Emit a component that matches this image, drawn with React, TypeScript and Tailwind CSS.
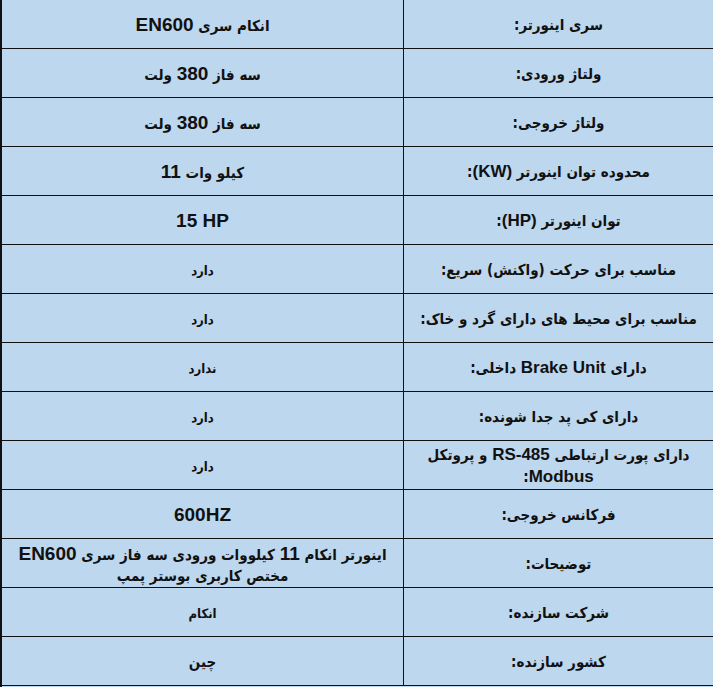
import { ReactNode } from "react";

type Row = {
  label: ReactNode;
  value: ReactNode;
  small?: boolean;
};

/* latin runs (EN600, 380, RS-485 ...) are a bit bigger than the farsi text */
const Latin = ({ children, big }: { children: ReactNode; big?: boolean }) => (
  <span
    className={big ? "text-[19px]" : "text-[17px]"}
    style={{ fontFamily: '"Liberation Sans", Arial, sans-serif' }}
  >
    {children}
  </span>
);

const rows: Row[] = [
  { label: "سری اینورتر:", value: <>انکام سری <Latin big>EN600</Latin></> },
  { label: "ولتاژ ورودی:", value: <>سه فاز <Latin big>380</Latin> ولت</> },
  { label: "ولتاژ خروجی:", value: <>سه فاز <Latin big>380</Latin> ولت</> },
  {
    label: <>محدوده توان اینورتر <Latin>(KW)</Latin>:</>,
    value: <>کیلو وات <Latin big>11</Latin></>,
  },
  {
    label: <>توان اینورتر <Latin>(HP)</Latin>:</>,
    value: (
      <span dir="ltr">
        <Latin big>15 HP</Latin>
      </span>
    ),
  },
  { label: "مناسب برای حرکت (واکنش) سریع:", value: "دارد", small: true },
  { label: "مناسب برای محیط های دارای گرد و خاک:", value: "دارد", small: true },
  {
    label: <>دارای <Latin>Brake Unit</Latin> داخلی:</>,
    value: "ندارد",
    small: true,
  },
  { label: "دارای کی پد جدا شونده:", value: "دارد", small: true },
  {
    label: (
      <>
        دارای پورت ارتباطی <Latin>RS-485</Latin> و پروتکل
        <br />
        <Latin>Modbus</Latin>:
      </>
    ),
    value: "دارد",
    small: true,
  },
  { label: "فرکانس خروجی:", value: <Latin big>600HZ</Latin> },
  {
    label: "توضیحات:",
    value: (
      <>
        اینورتر انکام <Latin big>11</Latin> کیلووات ورودی سه فاز سری{" "}
        <Latin big>EN600</Latin>
        <br />
        مختص کاربری بوستر پمپ
      </>
    ),
  },
  { label: "شرکت سازنده:", value: "انکام", small: true },
  { label: "کشور سازنده:", value: "چین" },
];

const App = () => {
  /*===== RENDER ===== */
  const renderRows = rows.map((row, i) => (
    <div
      key={i}
      className="grid h-[49px] grid-cols-[309px_1fr] border-b border-[#111]"
    >
      {/* label */}
      <div className="flex items-center justify-center px-1 pt-[2px] text-center text-[15px] leading-[21px] font-bold">
        <div>{row.label}</div>
      </div>
      {/* value */}
      <div
        className={`flex items-center justify-center border-r border-[#111] px-1 pt-[3px] text-center font-bold leading-[21px] ${
          row.small ? "text-[13px]" : "text-[15px]"
        }`}
      >
        <div>{row.value}</div>
      </div>
    </div>
  ));

  return (
    <div
      dir="rtl"
      className="w-[713px] h-[687px] overflow-hidden border-l-2 border-[#111] bg-[#bdd7ee] text-[#111]"
      style={{
        fontFamily: '"DejaVu Sans Condensed", "DejaVu Sans", sans-serif',
      }}
    >
      {renderRows}
    </div>
  );
};

export default App;
